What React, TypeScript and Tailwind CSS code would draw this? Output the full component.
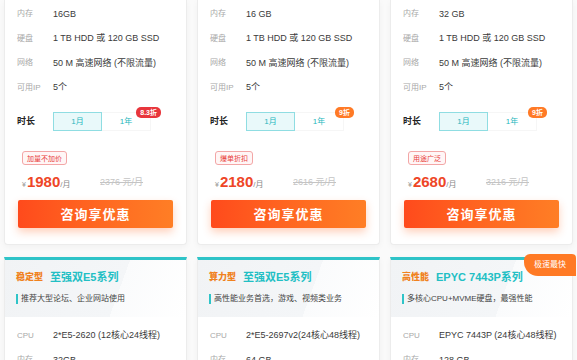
import React from 'react'

const plans = [
  { mem: '16GB', off: '8.3折', offBg: 'bg-[#e8363c]', tag: '加量不加价', price: '1980', old: '2376 元/月' },
  { mem: '16 GB', off: '9折', offBg: 'bg-[#ff7a26]', tag: '爆单折扣', price: '2180', old: '2616 元/月' },
  { mem: '32 GB', off: '9折', offBg: 'bg-[#ff7a26]', tag: '用途广泛', price: '2680', old: '3216 元/月' },
]

const series = [
  { type: '稳定型', name: '至强双E5系列', desc: '推荐大型论坛、企业网站使用', cpu: '2*E5-2620 (12核心24线程)', mem: '32GB' },
  { type: '算力型', name: '至强双E5系列', desc: '高性能业务首选，游戏、视频类业务', cpu: '2*E5-2697v2(24核心48线程)', mem: '64 GB' },
  { type: '高性能', name: 'EPYC 7443P系列', desc: '多核心CPU+MVME硬盘，最强性能', cpu: 'EPYC 7443P (24核心48线程)', mem: '128 GB', badge: '极速最快' },
]

function Row({ label, value }: { label: string; value: string }) {
  return (
    <div className="flex items-center h-[24.6px]">
      <span className="w-[36px] shrink-0 text-[8px] text-[#a8a8a8]">{label}</span>
      <span className="text-[9px] text-[#3a3a3a] whitespace-nowrap">{value}</span>
    </div>
  )
}

function PriceCard({ p }: { p: (typeof plans)[number] }) {
  return (
    <div className="flex flex-col bg-white border-x border-b border-[#ececec] rounded-b-[4px] px-[12px] pt-[2px] pb-[16px] shadow-[0_2px_6px_rgba(0,0,0,0.04)]">
      <Row label="内存" value={p.mem} />
      <Row label="硬盘" value="1 TB HDD 或 120 GB SSD" />
      <Row label="网络" value="50 M 高速网络 (不限流量)" />
      <Row label="可用IP" value="5个" />

      <div className="flex items-center mt-[12px] h-[19px]">
        <span className="w-[36px] shrink-0 text-[9px] font-bold text-[#222]">时长</span>
        <div className="flex">
          <div className="w-[49px] h-[19px] flex items-center justify-center border border-[#8fdde2] bg-[#e9f9fa] text-[8px] text-[#27b7bd]">1月</div>
          <div className="relative w-[49px] h-[19px] flex items-center justify-center border border-[#f6f6f6] border-l-0 text-[8px] text-[#27b7bd]">
            1年
            <span className={`absolute -top-[6px] -right-[11px] h-[11px] px-[4px] rounded-[5px] flex items-center text-[7px] font-bold leading-none text-white ${p.offBg}`}>
              {p.off}
            </span>
          </div>
        </div>
      </div>

      <div className="flex pl-[5px] mt-[20px]">
        <span className="flex items-center h-[14px] px-[4px] rounded-[3px] border border-[#f3a6a6] bg-[#fff6f6] text-[7px] leading-none text-[#e8403a]">
          {p.tag}
        </span>
      </div>

      <div className="flex items-center h-[20px] mt-[7px] pl-[5px]">
        <div className="w-[78px] flex items-baseline">
          <span className="text-[7px] text-[#999]">¥</span>
          <span className="text-[15px] font-bold text-[#ee4526] ml-[1px]">{p.price}</span>
          <span className="text-[8px] text-[#888]">/月</span>
        </div>
        <span className="text-[9px] text-[#c4c4c4] line-through">{p.old}</span>
      </div>

      <button className="mt-[8px] mx-[1px] h-[28px] rounded-[2px] bg-gradient-to-r from-[#ff4a1c] to-[#ff7e25] text-white text-[13px] font-bold tracking-[1px] shadow-[0_4px_8px_rgba(255,100,30,0.3)]">
        咨询享优惠
      </button>
    </div>
  )
}

function SeriesCard({ s }: { s: (typeof series)[number] }) {
  return (
    <div className="relative bg-white border border-[#ececec] border-t-[3px] border-t-[#2fc4c8] shadow-[0_2px_6px_rgba(0,0,0,0.04)] h-[120px]">
      {s.badge && (
        <span className="absolute -top-[6px] -right-[4px] w-[52px] h-[22px] flex items-center justify-center rounded-tl-[6px] rounded-bl-[14px] rounded-tr-[4px] bg-[#ff7a25] text-[8px] text-white">
          {s.badge}
        </span>
      )}
      <div className="px-[11px] pt-[9px] pb-[13px] bg-[linear-gradient(110deg,#f1f3f5_0%,#f4f6f8_62%,#fafbfc_62%,#ffffff_100%)]">
        <div className="flex items-center h-[16px] gap-[7px]">
          <span className="text-[9px] font-black text-[#f0821e]">{s.type}</span>
          <span className="text-[11px] font-bold text-[#22bfc4] whitespace-nowrap">{s.name}</span>
        </div>
        <div className="flex items-center h-[10px] mt-[9px]">
          <span className="w-[2px] h-[10px] bg-[#2fc4c8] mr-[3px]" />
          <span className="text-[8px] text-[#444] whitespace-nowrap">{s.desc}</span>
        </div>
      </div>
      <div className="px-[12px] pt-[6px]">
        <Row label="CPU" value={s.cpu} />
        <Row label="内存" value={s.mem} />
      </div>
    </div>
  )
}

export default function App() {
  return (
    <div className="h-[360px] w-[577px] overflow-hidden bg-[#fafafa] font-['Liberation_Sans','Noto_Sans_CJK_SC',sans-serif]">
      <div className="grid grid-cols-3 gap-x-[10px] gap-y-[12px] px-[4px]">
        {plans.map((p, i) => (
          <PriceCard key={i} p={p} />
        ))}
        {series.map((s, i) => (
          <SeriesCard key={i} s={s} />
        ))}
      </div>
    </div>
  )
}
